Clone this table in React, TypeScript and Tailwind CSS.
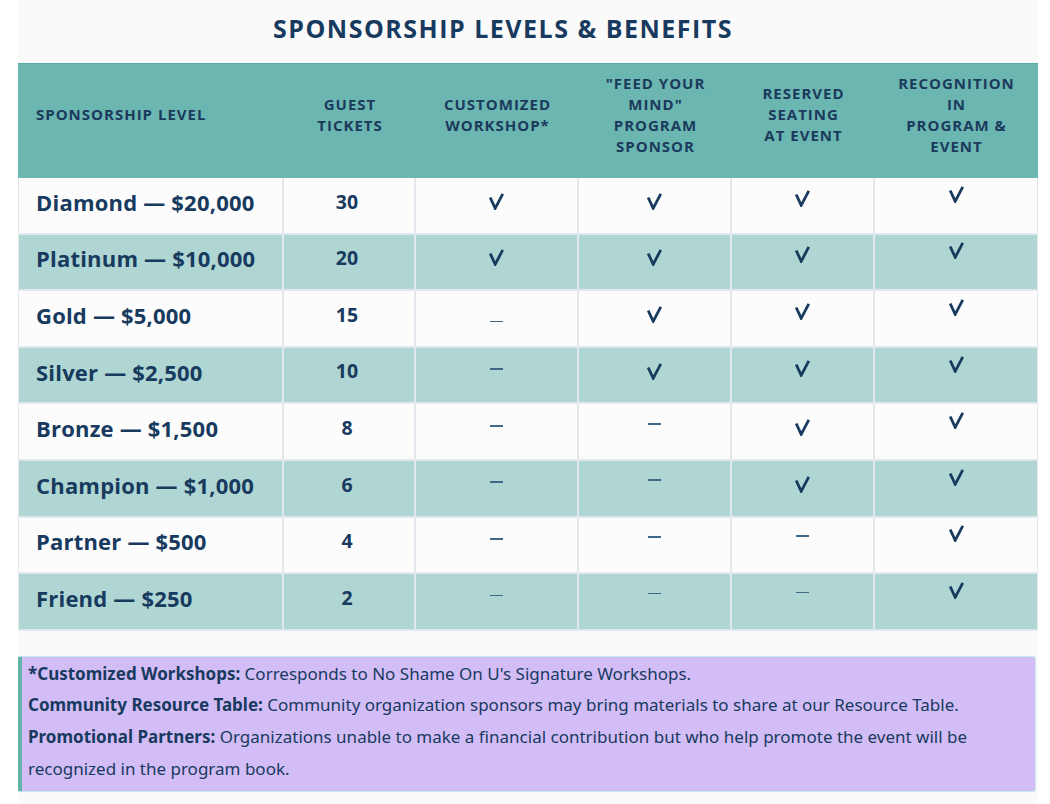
import React from "react";

type Cell = "c" | "d" | "u";

const rows: { label: string; tickets: string; cells: Cell[] }[] = [
  { label: "Diamond — $20,000", tickets: "30", cells: ["c", "c", "c", "c"] },
  { label: "Platinum — $10,000", tickets: "20", cells: ["c", "c", "c", "c"] },
  { label: "Gold — $5,000", tickets: "15", cells: ["u", "c", "c", "c"] },
  { label: "Silver — $2,500", tickets: "10", cells: ["d", "c", "c", "c"] },
  { label: "Bronze — $1,500", tickets: "8", cells: ["d", "d", "c", "c"] },
  { label: "Champion — $1,000", tickets: "6", cells: ["d", "d", "c", "c"] },
  { label: "Partner — $500", tickets: "4", cells: ["d", "d", "d", "c"] },
  { label: "Friend — $250", tickets: "2", cells: ["d", "d", "d", "c"] },
];

function Check() {
  return (
    <svg width="15" height="17" viewBox="0 0 15 17" className="block">
      <path d="M1.2 4.5 L6.2 15.3 L13.8 0.8" fill="none" stroke="#173a5e" strokeWidth="2.8" strokeLinejoin="miter" />
    </svg>
  );
}

function Dash() {
  return <span className="block w-[13px] h-[1.8px] bg-[#3f6888]" />;
}

const checkOffset = ["-translate-y-[4px]", "-translate-y-[4px]", "-translate-y-[7px]", "-translate-y-[11px]"];
const dashOffset = ["-translate-y-[6px]", "-translate-y-[8px]", "-translate-y-[9px]", "-translate-y-[9px]"];

export default function App() {
  return (
    <div className="w-[1050px] h-[804px] bg-white overflow-hidden" style={{ fontFamily: '"Open Sans", "Liberation Sans", sans-serif' }}>
      <div className="ml-[18px] w-[1020px] h-[804px] bg-[#fafafb] flex flex-col">
        <div className="h-[63px] flex items-center justify-center pr-[50px] pb-[6px]">
          <h1 className="text-[25px] font-bold tracking-[1.5px] text-[#173a5e]">SPONSORSHIP LEVELS &amp; BENEFITS</h1>
        </div>
        <div className="grid grid-cols-[266px_132px_163px_153px_143px_163px]">
          <div className="h-[115px] bg-[#6bb6b1] flex items-center pl-[18px] pb-[13px] border-t border-[#5aa9a4]">
            <span className="text-[15px] font-bold tracking-[1px] text-[#1b3a5c] leading-[21px]">SPONSORSHIP LEVEL</span>
          </div>
          {["GUEST\nTICKETS", "CUSTOMIZED\nWORKSHOP*", "\"FEED YOUR\nMIND\"\nPROGRAM\nSPONSOR", "RESERVED\nSEATING\nAT EVENT", "RECOGNITION\nIN\nPROGRAM &\nEVENT"].map((h, i) => (
            <div key={i} className="h-[115px] bg-[#6bb6b1] flex items-center justify-center pb-[13px] border-t border-[#5aa9a4]">
              <span className="text-[15px] font-bold tracking-[1px] text-[#1b3a5c] leading-[21px] text-center whitespace-pre-line">{h}</span>
            </div>
          ))}
          {rows.map((r, ri) => {
            const bg = ri % 2 === 0 ? "bg-[#fcfcfd]" : "bg-[#afd6d3]";
            return (
              <React.Fragment key={ri}>
                <div className={`${bg} h-[56.6px] flex items-center pl-[17px] border-b-2 border-r-2 border-l border-[#e3e7ee]`}>
                  <span className="text-[22px] font-bold tracking-[0.2px] text-[#173a5e] -translate-y-[3px]">{r.label}</span>
                </div>
                <div className={`${bg} h-[56.6px] flex items-center justify-center border-b-2 border-r-2 border-[#e3e7ee]`}>
                  <span className="text-[19.5px] font-bold text-[#173a5e] -translate-y-[4px] pr-[4px]">{r.tickets}</span>
                </div>
                {r.cells.map((c, ci) => (
                  <div key={ci} className={`${bg} h-[56.6px] flex items-center justify-center border-b-2 ${ci === 3 ? "border-r" : "border-r-2"} border-[#e3e7ee]`}>
                    {c === "c" ? (
                      <span className={ci === 2 && ri >= 4 ? "-translate-y-[4px]" : checkOffset[ci]}>
                        <Check />
                      </span>
                    ) : c === "u" ? (
                      <span className="translate-y-[3px]">
                        <Dash />
                      </span>
                    ) : (
                      <span className={dashOffset[ci]}>
                        <Dash />
                      </span>
                    )}
                  </div>
                ))}
              </React.Fragment>
            );
          })}
        </div>
        <div className="mt-[25px] mr-[2px] rounded-[3px] bg-[#d3bdf7] border border-[#c6e8ec] border-l-[4px] border-l-[#63b3ab] pl-[6px] pr-[10px] pt-[1px] pb-[7px] text-[17px] leading-[31.6px] text-[#173a5e]" style={{ fontFamily: '"Noto Sans", "Liberation Sans", sans-serif' }}>
          <p><b className="font-bold">*Customized Workshops:</b> Corresponds to No Shame On U's Signature Workshops.</p>
          <p><b className="font-bold">Community Resource Table:</b> Community organization sponsors may bring materials to share at our Resource Table.</p>
          <p><b className="font-bold">Promotional Partners:</b> Organizations unable to make a financial contribution but who help promote the event will be recognized in the program book.</p>
        </div>
      </div>
    </div>
  );
}
